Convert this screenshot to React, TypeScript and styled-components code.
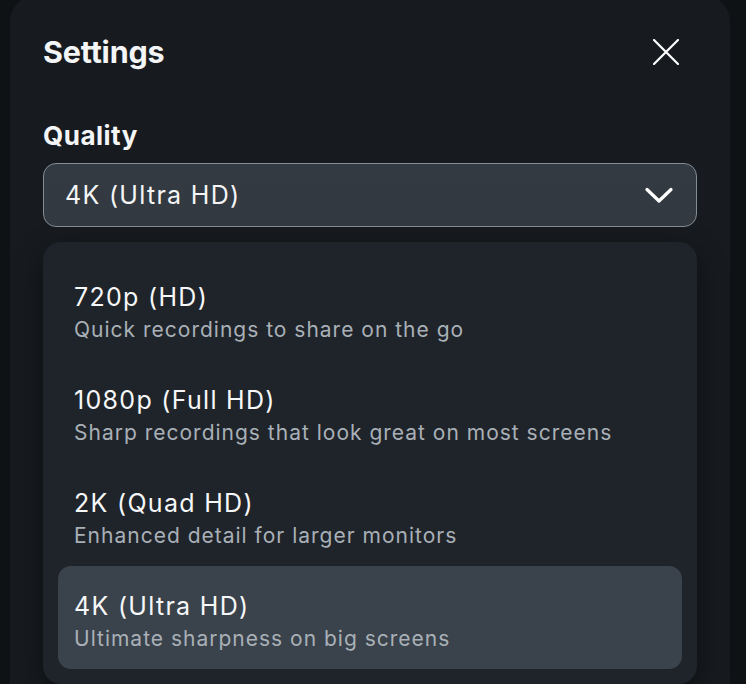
import { useState } from 'react';
import styled, { createGlobalStyle } from 'styled-components';

const GlobalStyle = createGlobalStyle`
  html, body {
    margin: 0;
    padding: 0;
    background: #0f1215;
    font-family: Inter, "Noto Sans", "Liberation Sans", sans-serif;
    color: #f4f5f6;
    -webkit-font-smoothing: antialiased;
  }
`;

const Page = styled.div`
  width: 746px;
  height: 684px;
  overflow: hidden;
  padding-left: 10px;
  box-sizing: border-box;
`;

const Panel = styled.section`
  width: 720px;
  margin-top: -6px;
  min-height: 720px;
  box-sizing: border-box;
  padding: 38px 33px 0 33px;
  background: #171b1f;
  border-radius: 28px;
`;

const Header = styled.div`
  display: flex;
  align-items: center;
  justify-content: space-between;
  height: 40px;
`;

const Title = styled.h1`
  margin: 0;
  font-size: 30.5px;
  line-height: 40px;
  font-weight: 700;
  letter-spacing: -0.2px;
`;

const CloseButton = styled.button`
  display: flex;
  align-items: center;
  justify-content: center;
  width: 26px;
  height: 26px;
  margin-right: 18px;
  padding: 0;
  border: none;
  background: transparent;
  color: #ffffff;
  cursor: pointer;
`;

const Label = styled.div`
  margin-top: 48px;
  font-size: 26px;
  line-height: 32px;
  font-weight: 700;
  letter-spacing: 0.5px;
`;

const Select = styled.button`
  display: flex;
  align-items: center;
  justify-content: space-between;
  width: 100%;
  height: 64px;
  margin-top: 11px;
  padding: 0 23px 0 21px;
  box-sizing: border-box;
  background: linear-gradient(180deg, #343a41 0%, #323940 100%);
  border: 1.5px solid #848c94;
  border-radius: 13px;
  color: #f4f5f6;
  font-family: inherit;
  font-size: 25px;
  letter-spacing: 1.3px;
  cursor: pointer;
`;

const Menu = styled.ul`
  list-style: none;
  margin: 15px 0 0 0;
  padding: 15px;
  background: #1f242a;
  border-radius: 18px;
  box-shadow: 0 10px 30px rgba(0, 0, 0, 0.45);
`;

const Option = styled.li<{ $active?: boolean }>`
  display: flex;
  flex-direction: column;
  height: 103px;
  padding: 23px 16px 0 16px;
  box-sizing: border-box;
  border-radius: 13px;
  background: ${(p) => (p.$active ? '#3a434c' : 'transparent')};
  cursor: pointer;
`;

const OptionTitle = styled.span`
  font-size: 25px;
  line-height: 34px;
  letter-spacing: 1.3px;
  color: #f6f7f8;
`;

const OptionText = styled.span`
  font-size: 21px;
  line-height: 31px;
  letter-spacing: 1px;
  color: #a9b0b7;
`;

const options = [
  { title: '720p (HD)', text: 'Quick recordings to share on the go' },
  { title: '1080p (Full HD)', text: 'Sharp recordings that look great on most screens' },
  { title: '2K (Quad HD)', text: 'Enhanced detail for larger monitors' },
  { title: '4K (Ultra HD)', text: 'Ultimate sharpness on big screens' },
];

export default function App() {
  const [selected, setSelected] = useState(3);

  return (
    <Page>
      <GlobalStyle />
      <Panel>
        <Header>
          <Title>Settings</Title>
          <CloseButton aria-label="Close">
            <svg width="26" height="26" viewBox="0 0 26 26" fill="none">
              <path d="M1 1L25 25M25 1L1 25" stroke="currentColor" strokeWidth="2.2" strokeLinecap="round" />
            </svg>
          </CloseButton>
        </Header>
        <Label>Quality</Label>
        <Select>
          <span>{options[selected].title}</span>
          <svg width="28" height="17" viewBox="0 0 28 17" fill="none">
            <path d="M2 2.5L14 14L26 2.5" stroke="#ffffff" strokeWidth="3.2" strokeLinecap="round" strokeLinejoin="round" />
          </svg>
        </Select>
        <Menu>
          {options.map((o, i) => (
            <Option key={o.title} $active={i === selected} onClick={() => setSelected(i)}>
              <OptionTitle>{o.title}</OptionTitle>
              <OptionText>{o.text}</OptionText>
            </Option>
          ))}
        </Menu>
      </Panel>
    </Page>
  );
}
